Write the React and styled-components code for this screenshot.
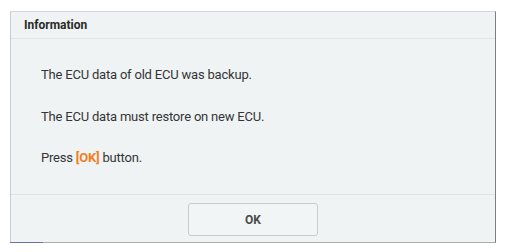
import React from "react";
import styled, { createGlobalStyle } from "styled-components";

const Global = createGlobalStyle`
  html, body { margin: 0; padding: 0; background: #ffffff; }
  body { font-family: Roboto, "Liberation Sans", Arial, sans-serif; }
`;

const Page = styled.div`
  padding: 11px 0 0 10px;
`;

const Dialog = styled.div`
  position: relative;
  width: 486px;
  height: 232px;
  box-sizing: border-box;
  background: #eff3f4;
  border-top: 1px solid #d2d6d7;
  border-left: 1px solid #c9cdce;
  border-right: 1px solid #7c7f80;
  border-bottom: 1px solid #a9adb0;
  display: flex;
  flex-direction: column;
`;

const Accent = styled.div`
  position: absolute;
  left: -1px;
  bottom: -1px;
  width: 33px;
  height: 1px;
  background: #6c6fa8;
`;

const Header = styled.div`
  height: 27px;
  box-sizing: border-box;
  border-bottom: 1px solid #e0e5e6;
  display: flex;
  align-items: center;
  padding-left: 13px;
  font-size: 12px;
  font-weight: 700;
  color: #2a2a2a;
`;

const Body = styled.div`
  flex: 1;
  display: flex;
  flex-direction: column;
  padding: 27px 0 0 30px;
  gap: 24.5px;
  border-bottom: 1px solid #dde2e3;
`;

const Line = styled.div`
  font-size: 13px;
  letter-spacing: -0.2px;
  line-height: 17px;
  color: #353535;
`;

const Hl = styled.span`
  color: #f08022;
  font-weight: 700;
`;

const Footer = styled.div`
  height: 47px;
  display: flex;
  justify-content: center;
  padding-top: 8px;
  box-sizing: border-box;
`;

const Button = styled.button`
  width: 130px;
  height: 33px;
  box-sizing: border-box;
  background: #f2f5f6;
  border: 1px solid #c8cccd;
  border-radius: 3px;
  font-family: Roboto, "Liberation Sans", Arial, sans-serif;
  font-size: 12px;
  font-weight: 700;
  color: #4a4a4a;
  padding: 0;
`;

export default function App() {
  return (
    <Page>
      <Global />
      <Dialog>
        <Header>Information</Header>
        <Body>
          <Line>The ECU data of old ECU was backup.</Line>
          <Line>The ECU data must restore on new ECU.</Line>
          <Line>
            Press <Hl>[OK]</Hl> button.
          </Line>
        </Body>
        <Footer>
          <Button>OK</Button>
        </Footer>
        <Accent />
      </Dialog>
    </Page>
  );
}
